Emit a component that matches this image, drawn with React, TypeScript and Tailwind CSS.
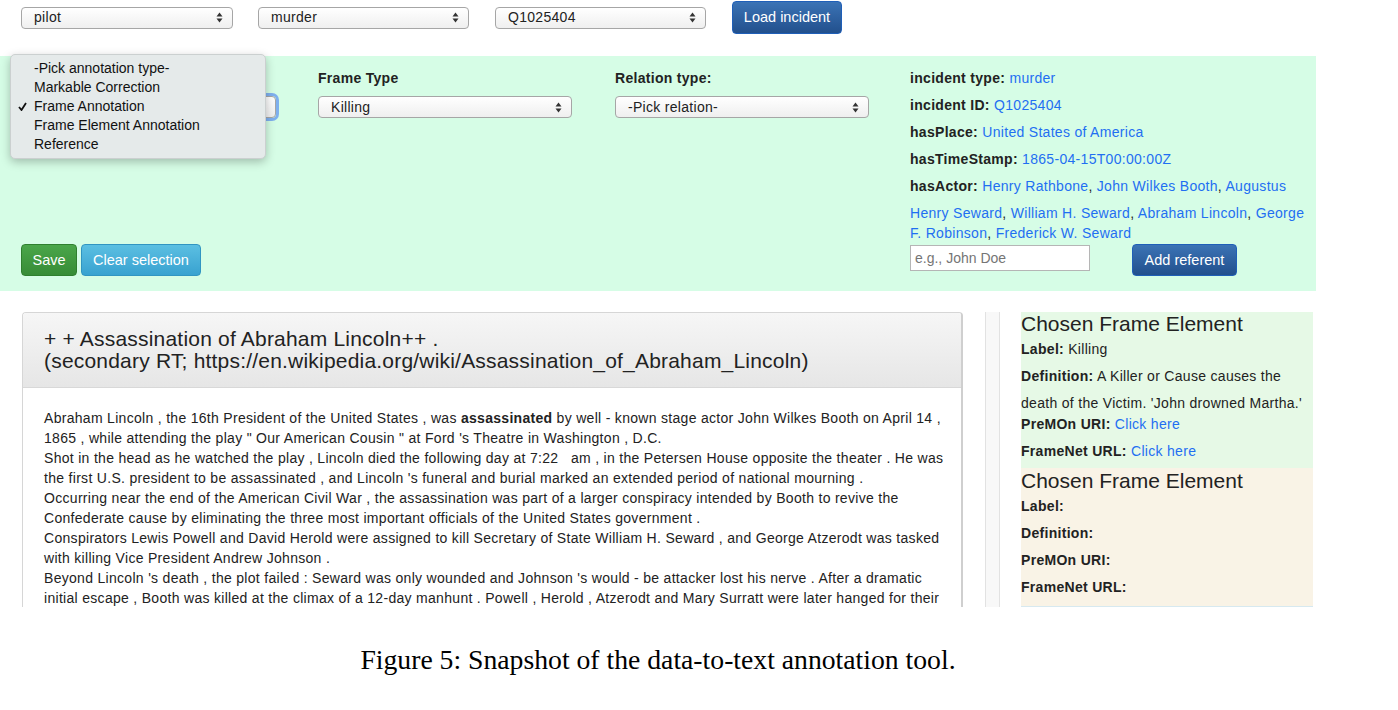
import React from 'react';

const font = { fontFamily: '"Liberation Sans", Arial, sans-serif' };

function Arrows() {
  return (
    <svg width="7" height="11" viewBox="0 0 7 11" className="shrink-0">
      <path d="M3.5 0.5 L6.5 4.5 H0.5 Z" fill="#333" />
      <path d="M3.5 10.5 L6.5 6.5 H0.5 Z" fill="#333" />
    </svg>
  );
}

function Select({ value, className = '' }: { value: string; className?: string }) {
  return (
    <div
      className={`h-[22px] flex items-center justify-between pl-[12px] pr-[9px] rounded-[4px] border border-[#a6a6a6] bg-gradient-to-b from-white to-[#efefef] text-[14px] tracking-[0.3px] text-[#222] ${className}`}
    >
      <span>{value}</span>
      <Arrows />
    </div>
  );
}

function BlueButton({ children, className = '' }: { children: React.ReactNode; className?: string }) {
  return (
    <button
      className={`rounded-[4px] border border-[#1f5fb8] bg-gradient-to-b from-[#3b73b5] to-[#22508d] text-white text-[14.5px] ${className}`}
    >
      {children}
    </button>
  );
}

const menuItems = ['-Pick annotation type-', 'Markable Correction', 'Frame Annotation', 'Frame Element Annotation', 'Reference'];

const bodyLines: React.ReactNode[] = [
  <>Abraham Lincoln , the 16th President of the United States , was <b>assassinated</b> by well - known stage actor John Wilkes Booth on April 14 ,</>,
  <>1865 , while attending the play " Our American Cousin " at Ford 's Theatre in Washington , D.C.</>,
  <>Shot in the head as he watched the play , Lincoln died the following day at 7:22   am , in the Petersen House opposite the theater . He was</>,
  <>the first U.S. president to be assassinated , and Lincoln 's funeral and burial marked an extended period of national mourning .</>,
  <>Occurring near the end of the American Civil War , the assassination was part of a larger conspiracy intended by Booth to revive the</>,
  <>Confederate cause by eliminating the three most important officials of the United States government .</>,
  <>Conspirators Lewis Powell and David Herold were assigned to kill Secretary of State William H. Seward , and George Atzerodt was tasked</>,
  <>with killing Vice President Andrew Johnson .</>,
  <>Beyond Lincoln 's death , the plot failed : Seward was only wounded and Johnson 's would - be attacker lost his nerve . After a dramatic</>,
  <>initial escape , Booth was killed at the climax of a 12-day manhunt . Powell , Herold , Atzerodt and Mary Surratt were later hanged for their</>,
];

function Link({ children }: { children: React.ReactNode }) {
  return <span className="text-[#1f6ff2]">{children}</span>;
}

export default function App() {
  return (
    <div className="w-[1398px] h-[710px] bg-white overflow-hidden text-[#222]" style={font}>
      <div className="w-[1316px]">
        {/* top selectors */}
        <div className="flex items-center pt-[1px] pl-[21px]">
          <Select value="pilot" className="w-[212px]" />
          <Select value="murder" className="w-[211px] ml-[25px]" />
          <Select value="Q1025404" className="w-[211px] ml-[26px]" />
          <BlueButton className="h-[33px] w-[110px] ml-[26px]">Load incident</BlueButton>
        </div>

        {/* annotation panel */}
        <div className="mt-[22px] h-[235px] bg-[#d6fde6] flex pl-[21px]">
          <div className="w-[889px] flex flex-col justify-between pt-[14px] pb-[15px] tracking-[0.3px]">
            <div className="flex">
              <div className="w-[297px] relative">
                <div className="h-[16px]" />
                {/* annotation type select, open, hidden behind its menu */}
                <div className="mt-[10px] w-[255px] rounded-[4px] shadow-[0_0_0_3px_#7fb0ee]">
                  <Select value="" className="w-[255px]" />
                </div>
                <div className="absolute left-[-11px] top-[-16px] w-[256px] py-[4px] rounded-[5px] bg-[#e5eaea] border border-[#cbd0d0] shadow-[0_3px_10px_rgba(0,0,0,0.25)] text-[14px] tracking-normal text-[#111]">
                  {menuItems.map((item) => (
                    <div key={item} className="relative h-[19px] leading-[19px] pl-[23px]">
                      {item === 'Frame Annotation' && (
                        <svg width="9" height="9" viewBox="0 0 9 9" className="absolute left-[7px] top-[5px]">
                          <path d="M1 5 L3.5 8 L8 1" stroke="#111" strokeWidth="1.8" fill="none" />
                        </svg>
                      )}
                      {item}
                    </div>
                  ))}
                </div>
              </div>
              <div className="w-[297px]">
                <div className="text-[14px] font-bold leading-[16px]">Frame Type</div>
                <Select value="Killing" className="mt-[10px] w-[254px]" />
              </div>
              <div className="w-[295px]">
                <div className="text-[14px] font-bold leading-[16px]">Relation type:</div>
                <Select value="-Pick relation-" className="mt-[10px] w-[254px]" />
              </div>
            </div>
            <div className="flex gap-[4px] tracking-normal">
              <button className="h-[32px] w-[56px] pt-[2px] rounded-[4px] border border-[#2f7f2f] bg-gradient-to-b from-[#4aa64a] to-[#378c37] text-white text-[14.5px]">
                Save
              </button>
              <button className="h-[32px] w-[120px] pt-[2px] rounded-[4px] border border-[#3195c2] bg-gradient-to-b from-[#5bbfe2] to-[#38a2d0] text-white text-[14.5px]">
                Clear selection
              </button>
            </div>
          </div>

          <div className="pt-[12px] text-[14px] tracking-[0.3px]">
            <div className="leading-[20px] mb-[7px]"><b>incident type:</b> <Link>murder</Link></div>
            <div className="leading-[20px] mb-[7px]"><b>incident ID:</b> <Link>Q1025404</Link></div>
            <div className="leading-[20px] mb-[7px]"><b>hasPlace:</b> <Link>United States of America</Link></div>
            <div className="leading-[20px] mb-[7px]"><b>hasTimeStamp:</b> <Link>1865-04-15T00:00:00Z</Link></div>
            <div className="leading-[20px] mb-[7px] whitespace-nowrap">
              <b>hasActor:</b> <Link>Henry Rathbone</Link>, <Link>John Wilkes Booth</Link>, <Link>Augustus</Link>
            </div>
            <div className="leading-[20px] whitespace-nowrap">
              <Link>Henry Seward</Link>, <Link>William H. Seward</Link>, <Link>Abraham Lincoln</Link>, <Link>George</Link>
              <br />
              <Link>F. Robinson</Link>, <Link>Frederick W. Seward</Link>
            </div>
            <div className="flex items-start mt-[1px] tracking-normal">
              <div className="mt-[1px] w-[180px] h-[26px] border border-[#b5b5b5] bg-white pl-[4px] leading-[24px] text-[14px] text-[#757575]">
                e.g., John Doe
              </div>
              <BlueButton className="h-[32px] w-[105px] pt-[2px] ml-[42px]">Add referent</BlueButton>
            </div>
          </div>
        </div>

        {/* main content */}
        <div className="mt-[21px] h-[295px] flex pl-[22px]">
          <div className="w-[941px] h-full overflow-hidden rounded-t-[4px] border-l border-t border-[#d6d6d6] border-r-2 border-r-[#cfcfcf] bg-white">
            <div className="h-[75px] border-b border-[#d8d8d8] bg-gradient-to-b from-[#f6f6f6] to-[#e6e6e6] pt-[15px] pl-[21px] text-[21px] tracking-[0.2px] leading-[22px] text-[#222]">
              <div>+ + Assassination of Abraham Lincoln++ .</div>
              <div>(secondary RT; https://en.wikipedia.org/wiki/Assassination_of_Abraham_Lincoln)</div>
            </div>
            <div className="pt-[20px] pl-[21px] text-[14px] tracking-[0.3px] leading-[20px] text-[#222]">
              {bodyLines.map((line, i) => (
                <div key={i} className="whitespace-pre">{line}</div>
              ))}
            </div>
          </div>

          <div className="ml-[22px] w-[15px] h-full border-l border-r border-[#e2e2e2] bg-[#f8f8f8]" />

          <div className="ml-[21px] w-[292px] text-[14px] tracking-[0.3px] whitespace-nowrap">
            <div className="h-[156px] bg-[#e6f9e6] pb-[3px]">
              <div className="text-[21px] tracking-normal leading-[24px]">Chosen Frame Element</div>
              <div className="leading-[27px]"><b>Label:</b> Killing</div>
              <div className="leading-[27px]">
                <b>Definition:</b> A Killer or Cause causes the
                <br />
                death of the Victim. 'John drowned Martha.'
              </div>
              <div className="leading-[20px] -mt-[3px]"><b>PreMOn URI:</b> <Link>Click here</Link></div>
              <div className="leading-[27px] mt-[4px]"><b>FrameNet URL:</b> <Link>Click here</Link></div>
            </div>
            <div className="h-[139px] bg-[#f9f3e6] border-b border-[#d7e9f0] pt-[1px]">
              <div className="text-[21px] tracking-normal leading-[24px]">Chosen Frame Element</div>
              <div className="leading-[27px] font-bold">Label:</div>
              <div className="leading-[27px] font-bold">Definition:</div>
              <div className="leading-[27px] font-bold">PreMOn URI:</div>
              <div className="leading-[27px] font-bold">FrameNet URL:</div>
            </div>
          </div>
        </div>

        {/* caption */}
        <div
          className="mt-[39px] text-center text-[27.7px] leading-[28px] text-black"
          style={{ fontFamily: '"Liberation Serif", "Times New Roman", serif' }}
        >
          Figure 5: Snapshot of the data-to-text annotation tool.
        </div>
      </div>
    </div>
  );
}
